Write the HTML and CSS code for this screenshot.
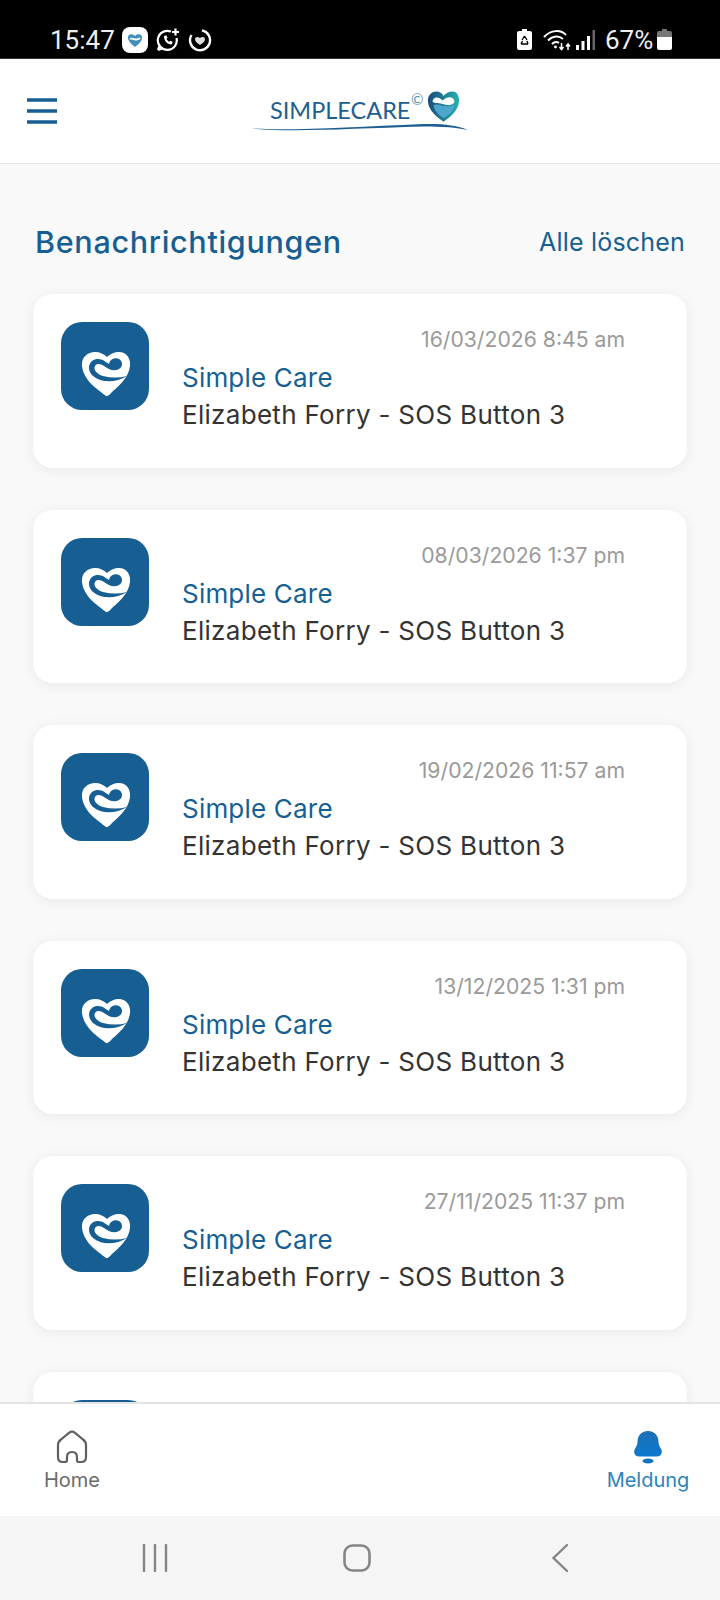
FILE: index.html
```html
<!DOCTYPE html>
<html lang="de">
<head>
<meta charset="utf-8">
<title>Benachrichtigungen</title>
<link rel="stylesheet" href="styles.css">
</head>
<body>
<svg class="defs" width="0" height="0" aria-hidden="true">
  <defs>
    <symbol id="appheart" viewBox="0 0 88 88">
      <rect width="88" height="88" rx="21" fill="#175f92"/>
      <path d="M45 74 C38 68 23 60 21 44 C20 35 27 30 34 30 C39 30 43 32 46 35 C49 32 53 30 58 30 C65 30 70 36 69 44 C68 55 58 64 52 69 C50 71 47 75 45 74 Z" fill="#fff"/>
      <path d="M66 54 C55 61 40 61 32 54 C25 47 28 38 36 37 C41 36.500 45 40 48 42 C49 37 54 35 58 37 C62 39 62 45 58 47 C53 50 47 47 43 44 C40 42 36 41 34 44 C32 48 36 52 42 54 C50 56 58 56 66 54 Z" fill="#175f92"/>
    </symbol>
  </defs>
</svg>
<div class="app">
  <div class="status">
    <span class="clock">15:47</span>
    <svg class="st-app" viewBox="0 0 26 26"><rect width="26" height="26" rx="8" fill="#fff"/><path d="M13 20 C9 17 6 14 6 10.500 C6 7.500 10 6 13 9 C16 6 20 7.500 20 10.500 C20 14 17 17 13 20 Z" fill="#3f8fb8"/><path d="M8 12 C11 10 14 15 18 11" fill="none" stroke="#fff" stroke-width="1.800"/></svg>
    <svg class="st-wa" viewBox="0 0 24 24" fill="none" stroke="#fff" stroke-width="2.200"><path d="M15 3.600 A9.500 9.500 0 1 0 20.500 10 M2 22 L3.800 16.500 M2 22 L7.500 20.300"/><path d="M8 8 C8 13 11 16 15.500 16.500 L16.800 14 L14.500 12.800 L13.300 13.800 C12 13 11 12 10.500 10.700 L11.500 9.500 L10.300 7.200 Z" fill="#fff" stroke="none"/><path d="M19.500 0.500 V7.500 M16 4 H23"/></svg>
    <svg class="st-ring" viewBox="0 0 24 24" fill="none" stroke="#fff" stroke-width="2.400"><path d="M14 2.400 A10 10 0 1 1 3.500 7"/><path d="M12 17 C9 15 7 13.500 7 11 C7 9 10 8 12 10 C14 8 17 9 17 11 C17 13.500 15 15 12 17 Z" fill="#ddd" stroke="none"/></svg>
    <span class="st-spacer"></span>
    <svg class="st-eco" viewBox="0 0 15 21"><path d="M5 0 H10 V2 H13 A2 2 0 0 1 15 4 V19 A2 2 0 0 1 13 21 H2 A2 2 0 0 1 0 19 V4 A2 2 0 0 1 2 2 H5 Z" fill="#fff"/><path d="M7.500 7 L5 11 M7.500 7 L10 11 M4 15 H11 M4 15 L5.500 12 M11 15 L10 12" stroke="#000" stroke-width="1.300" fill="none"/></svg>
    <svg class="st-wifi" viewBox="0 0 28 22" fill="none" stroke="#fff" stroke-width="2"><path d="M1 8 C8 0.500 18 0.500 23 6"/><path d="M5 11.500 C10 6.500 16 6.500 20 10"/><path d="M9 15 C11.500 12.500 14 12.500 16 14"/><circle cx="12.500" cy="18" r="1.400" fill="#fff" stroke="none"/><path d="M18.500 14 V20 M16.500 18 L18.500 20.500 L20.500 18 M25 21 V15 M23 17.500 L25 15 L27 17.500" stroke-width="1.500"/></svg>
    <svg class="st-signal" viewBox="0 0 19 20"><rect x="0" y="15" width="3" height="5" fill="#fff"/><rect x="5.500" y="11" width="3" height="9" fill="#fff"/><rect x="11" y="6" width="3" height="14" fill="#fff"/><rect x="16.500" y="0" width="2.500" height="20" fill="#666"/></svg>
    <span class="pct">67%</span>
    <svg class="st-bat" viewBox="0 0 15 21"><path d="M5 0 H10 V2 H13 A2 2 0 0 1 15 4 V8 H0 V4 A2 2 0 0 1 2 2 H5 Z" fill="#777"/><path d="M0 8 H15 V19 A2 2 0 0 1 13 21 H2 A2 2 0 0 1 0 19 Z" fill="#fff"/></svg>
  </div>

  <header class="topbar">
    <svg class="burger" viewBox="0 0 30 26"><path d="M0 2 H30 M0 13 H30 M0 24 H30" stroke="#175f92" stroke-width="3.400" stroke-linecap="round"/></svg>
    <div class="logo">
      <span class="logo-text">SIMPLECARE</span>
      <span class="logo-c">©</span>
      <svg class="logo-heart" viewBox="0 0 36 34">
        <defs>
          <linearGradient id="lh" x1="0" x2="1" y1="0" y2="0"><stop offset="0" stop-color="#1d4a7a"/><stop offset="1" stop-color="#22b3b0"/></linearGradient>
        </defs>
        <path d="M18 33 C12 29 1 21 1 10 C1 3 6 0 10 0 C14 0 17 2 18 5 C20 2 24 0 28 0 C33 0 35 5 35 10 C35 21 24 29 18 33 Z" fill="url(#lh)"/>
        <path d="M6 11 C7 5 13 6 17 10 C22 5 29 5 30 11 C30 14 24 16 18 14 C14 12 8 14 6 11 Z" fill="#fff"/>
        <path d="M7 15 C13 12 18 19 30 15 C29 22 22 27 18 29 C13 26 8 21 7 15 Z" fill="#4fa6cc"/>
      </svg>
      <svg class="logo-swoosh" viewBox="0 0 216 12"><path d="M0 8.500 C40 11 100 7 171 4 C190 3.500 205 5 216 10 C205 7.500 190 6.500 171 6.500 C100 8.500 40 12.500 0 8.500 Z" fill="#1d5f90"/></svg>
    </div>
  </header>

  <main class="content">
    <div class="heading">
      <h1 class="title">Benachrichtigungen</h1>
      <span class="clear">Alle löschen</span>
    </div>
    <div class="list">
      <article class="card">
        <svg class="avatar"><use href="#appheart"/></svg>
        <div class="info">
          <div class="date">16/03/2026 8:45 am</div>
          <div class="sender">Simple Care</div>
          <div class="msg">Elizabeth Forry - SOS Button 3</div>
        </div>
      </article>
      <article class="card">
        <svg class="avatar"><use href="#appheart"/></svg>
        <div class="info">
          <div class="date">08/03/2026 1:37 pm</div>
          <div class="sender">Simple Care</div>
          <div class="msg">Elizabeth Forry - SOS Button 3</div>
        </div>
      </article>
      <article class="card">
        <svg class="avatar"><use href="#appheart"/></svg>
        <div class="info">
          <div class="date">19/02/2026 11:57 am</div>
          <div class="sender">Simple Care</div>
          <div class="msg">Elizabeth Forry - SOS Button 3</div>
        </div>
      </article>
      <article class="card">
        <svg class="avatar"><use href="#appheart"/></svg>
        <div class="info">
          <div class="date">13/12/2025 1:31 pm</div>
          <div class="sender">Simple Care</div>
          <div class="msg">Elizabeth Forry - SOS Button 3</div>
        </div>
      </article>
      <article class="card">
        <svg class="avatar"><use href="#appheart"/></svg>
        <div class="info">
          <div class="date">27/11/2025 11:37 pm</div>
          <div class="sender">Simple Care</div>
          <div class="msg">Elizabeth Forry - SOS Button 3</div>
        </div>
      </article>
      <article class="card">
        <svg class="avatar"><use href="#appheart"/></svg>
      </article>
    </div>
  </main>

  <nav class="tabs">
    <div class="tab">
      <svg class="tab-icon" viewBox="0 0 32 34" fill="none" stroke="#5f5f5f" stroke-width="2.200" stroke-linejoin="round"><path d="M2 15 C2 12.500 3 11 5 9.500 L13 2.800 C15 1.200 17 1.200 19 2.800 L27 9.500 C29 11 30 12.500 30 15 V27 C30 30 28.500 32 25.500 32 H23 C21.800 32 21 31 21 30 V27 C21 24 19 22 16 22 C13 22 11 24 11 27 V30 C11 31 10.200 32 9 32 H6.500 C3.500 32 2 30 2 27 Z"/></svg>
      <span class="tab-label">Home</span>
    </div>
    <div class="tab active">
      <svg class="tab-icon" viewBox="0 0 32 34">
        <defs><linearGradient id="bell" x1="0" x2="0" y1="0" y2="1"><stop offset="0" stop-color="#1c6fb4"/><stop offset="1" stop-color="#0b79d0"/></linearGradient></defs>
        <path d="M16 1 C23 1 26.500 6 26.500 12 C26.500 17 31 19 29.500 23.500 C29 25.500 27 26.500 25 26.500 H7 C5 26.500 3 25.500 2.500 23.500 C1 19 5.500 17 5.500 12 C5.500 6 9 1 16 1 Z" fill="url(#bell)"/>
        <ellipse cx="16" cy="31" rx="5.500" ry="2.500" fill="#0f73bd"/>
      </svg>
      <span class="tab-label">Meldung</span>
    </div>
  </nav>

  <div class="sysnav">
    <svg class="sys-recent" viewBox="0 0 26 28"><path d="M2 1 V27 M13 1 V27 M24 1 V27" stroke="#858585" stroke-width="2.400" stroke-linecap="round"/></svg>
    <svg class="sys-home" viewBox="0 0 28 28"><rect x="1.500" y="1.500" width="25" height="25" rx="8" fill="none" stroke="#858585" stroke-width="2.600"/></svg>
    <svg class="sys-back" viewBox="0 0 18 30"><path d="M16 2 L2.500 15 L16 28" fill="none" stroke="#858585" stroke-width="2.400" stroke-linecap="round"/></svg>
  </div>
</div>
</body>
</html>
```

FILE: styles.css
```css
* { box-sizing: border-box; }
html, body { margin: 0; padding: 0; }
body { background: #f9f9f9; font-family: "Inter", "Noto Sans", sans-serif; }
.defs { display: block; height: 0; }
.app { width: 720px; height: 1600px; display: flex; flex-direction: column; overflow: hidden; background: #f9f9f9; }

.status { height: 59px; flex: none; background: #000; border-bottom: 1px solid #333; display: flex; align-items: center; padding: 21px 48px 0 50px; color: #fff; font-family: "Roboto", sans-serif; }
.clock { font-size: 26px; color: #eee; width: 62px; }
.st-app { width: 26px; height: 26px; margin-left: 10px; }
.st-wa { width: 24px; height: 24px; margin-left: 8px; }
.st-ring { width: 24px; height: 24px; margin-left: 8px; }
.st-spacer { flex: 1; }
.st-eco { width: 15px; height: 21px; }
.st-wifi { width: 28px; height: 22px; margin-left: 11px; }
.st-signal { width: 19px; height: 20px; margin-left: 5px; }
.pct { font-size: 26px; color: #eee; margin-left: 10px; width: 47px; }
.st-bat { width: 15px; height: 21px; margin-left: 5px; }

.topbar { height: 105px; flex: none; background: #fff; border-bottom: 1px solid #e6e6e6; display: flex; align-items: center; padding: 0 0 0 27px; position: relative; }
.burger { width: 30px; height: 26px; margin-top: -1px; }
.logo { width: 216px; height: 44px; margin-left: 195px; margin-top: -4px; position: relative; }
.logo-text { position: absolute; left: 18px; top: 9px; font-family: "Lato", sans-serif; font-size: 23.5px; color: #1f5f8e; line-height: 28px; }
.logo-c { position: absolute; left: 159px; top: 2px; font-family: "Lato", sans-serif; font-size: 15px; color: #5a8fb0; line-height: 20px; }
.logo-heart { position: absolute; left: 175px; top: 4px; width: 33px; height: 32px; }
.logo-swoosh { position: absolute; left: 0; top: 33px; width: 216px; height: 12px; }

.content { flex: 1; min-height: 0; overflow: hidden; padding: 0 33px; }
.heading { display: flex; justify-content: space-between; align-items: center; padding: 26px 2px 0 2px; height: 130px; }
.title { margin: 0; font-size: 30.5px; font-weight: 500; color: #175f92; line-height: 40px; letter-spacing: 0.7px; }
.clear { font-size: 25px; color: #175f92; line-height: 40px; letter-spacing: 0.2px; }

.list { display: flex; flex-direction: column; gap: 42px; }
.card { height: 173.5px; flex: none; background: #fff; border-radius: 20px; box-shadow: 0 2px 14px rgba(0, 0, 0, 0.07); display: flex; padding: 28px 62px 0 28px; }
.avatar { width: 88px; height: 88px; flex: none; }
.info { flex: 1; margin-left: 33px; padding-top: 2px; }
.date { text-align: right; font-size: 21.2px; color: #9a9a9a; line-height: 30px; }
.sender { font-size: 26px; color: #175f92; line-height: 34px; margin-top: 7px; letter-spacing: 0.2px; }
.msg { font-size: 26px; color: #333; line-height: 36px; margin-top: 2px; letter-spacing: 0.3px; }

.tabs { height: 114px; flex: none; background: #fff; border-top: 2px solid #e4e4e4; display: flex; justify-content: space-between; }
.tab { width: 144px; display: flex; flex-direction: column; align-items: center; padding-top: 26px; }
.tab-icon { width: 32px; height: 34px; }
.tab-label { font-size: 20px; line-height: 26px; color: #6b6b6b; margin-top: 3px; }
.active .tab-label { color: #2a84bd; }

.sysnav { height: 84px; flex: none; background: #f5f5f5; display: flex; align-items: center; position: relative; padding-left: 142px; }
.sys-recent { width: 26px; height: 28px; }
.sys-home { width: 28px; height: 28px; margin-left: 175px; }
.sys-back { width: 18px; height: 30px; margin-left: 180px; }
```
